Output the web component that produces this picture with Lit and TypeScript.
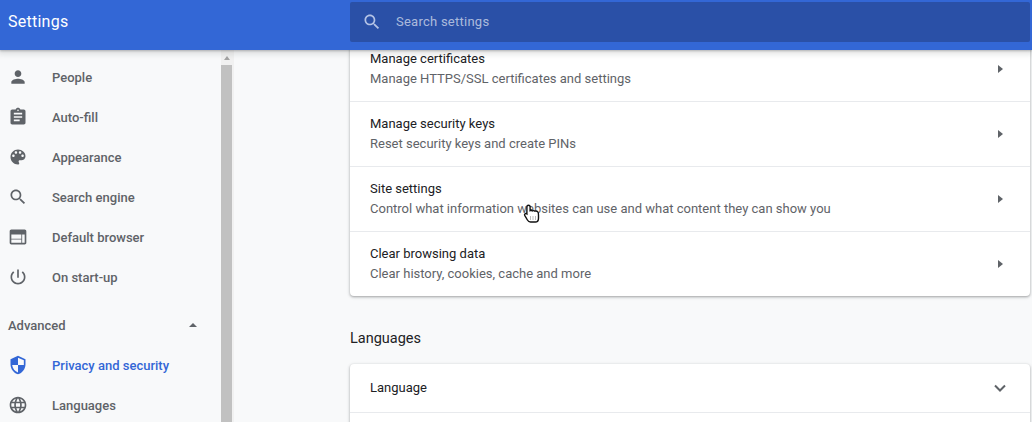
import { LitElement, html, css, svg } from "lit";
import { customElement } from "lit/decorators.js";

const icons: Record<string, unknown> = {
  people: svg`<path d="M12 12c2.21 0 4-1.79 4-4s-1.79-4-4-4-4 1.79-4 4 1.79 4 4 4zm0 2c-2.67 0-8 1.34-8 4v2h16v-2c0-2.66-5.33-4-8-4z"/>`,
  fill: svg`<path d="M19 3h-4.180C14.400 1.840 13.300 1 12 1s-2.400.84-2.820 2H5c-1.100 0-2 .9-2 2v14c0 1.100.9 2 2 2h14c1.100 0 2-.9 2-2V5c0-1.100-.9-2-2-2zm-7 0c.55 0 1 .45 1 1s-.45 1-1 1-1-.45-1-1 .45-1 1-1zm2 14H7v-2h7v2zm3-4H7v-2h10v2zm0-4H7V7h10v2z"/>`,
  palette: svg`<path d="M12 3c-4.970 0-9 4.030-9 9s4.030 9 9 9c.83 0 1.500-.67 1.500-1.500 0-.39-.15-.74-.39-1.010-.23-.26-.38-.61-.38-.99 0-.83.67-1.500 1.500-1.500H16c2.760 0 5-2.240 5-5 0-4.420-4.030-8-9-8zm-5.500 9c-.83 0-1.500-.67-1.500-1.500S5.670 9 6.500 9 8 9.670 8 10.500 7.330 12 6.500 12zm3-4C8.670 8 8 7.330 8 6.500S8.670 5 9.500 5s1.500.67 1.500 1.500S10.330 8 9.500 8zm5 0c-.83 0-1.500-.67-1.500-1.500S13.670 5 14.500 5s1.500.67 1.500 1.500S15.330 8 14.500 8zm3 4c-.83 0-1.500-.67-1.500-1.500S16.670 9 17.500 9s1.500.67 1.500 1.500-.67 1.500-1.500 1.500z"/>`,
  search: svg`<path d="M15.500 14h-.79l-.28-.27C15.410 12.590 16 11.110 16 9.500 16 5.910 13.090 3 9.500 3S3 5.910 3 9.500 5.910 16 9.500 16c1.610 0 3.090-.59 4.230-1.570l.27.28v.79l5 4.990L20.490 19l-4.990-5zm-6 0C7.010 14 5 11.990 5 9.500S7.010 5 9.500 5 14 7.010 14 9.500 11.990 14 9.500 14z"/>`,
  browser: svg`<path d="M22 5c0-1.100-.9-2-2-2H4c-1.100 0-2 .9-2 2v14c0 1.100.9 2 2 2h16c1.100 0 2-.9 2-2V5zm-6 14H4v-4h12v4zm0-5H4V9h12v5zm4 5h-3V9h3v10z"/>`,
  power: svg`<path d="M13 3h-2v10h2V3zm4.830 2.170l-1.420 1.420C17.990 7.860 19 9.810 19 12c0 3.870-3.130 7-7 7s-7-3.130-7-7c0-2.190 1.010-4.140 2.580-5.420L6.170 5.170C4.230 6.820 3 9.260 3 12c0 4.970 4.030 9 9 9s9-4.030 9-9c0-2.740-1.230-5.180-3.170-6.830z"/>`,
  shield: svg`<g transform="translate(24 0) scale(-1 1)"><path d="M12 1L3 5v6c0 5.550 3.840 10.740 9 12 5.160-1.260 9-6.450 9-12V5l-9-4zm0 10.990h7c-.53 4.120-3.280 7.790-7 8.940V12H5V6.300l7-3.110v8.800z"/></g>`,
  globe: svg`<path d="M11.990 2C6.470 2 2 6.480 2 12s4.470 10 9.990 10C17.520 22 22 17.520 22 12S17.520 2 11.990 2zm6.930 6h-2.950c-.32-1.250-.78-2.450-1.380-3.560 1.840.63 3.370 1.910 4.330 3.560zM12 4.040c.83 1.200 1.480 2.530 1.910 3.960h-3.820c.43-1.430 1.080-2.760 1.910-3.960zM4.260 14C4.100 13.360 4 12.690 4 12s.1-1.360.26-2h3.380c-.08.660-.14 1.320-.14 2 0 .68.060 1.340.14 2H4.260zm.82 2h2.950c.32 1.250.78 2.450 1.380 3.560-1.840-.63-3.370-1.900-4.330-3.560zm2.950-8H5.080c.96-1.660 2.490-2.930 4.330-3.560C8.810 5.550 8.350 6.750 8.030 8zM12 19.960c-.83-1.200-1.480-2.530-1.910-3.960h3.820c-.43 1.430-1.080 2.760-1.910 3.960zM14.340 14H9.660c-.09-.66-.16-1.320-.16-2 0-.68.070-1.350.16-2h4.680c.09.650.16 1.320.16 2 0 .68-.07 1.340-.16 2zm.25 5.560c.6-1.110 1.060-2.310 1.380-3.560h2.950c-.96 1.650-2.490 2.930-4.330 3.560zM16.360 14c.08-.66.14-1.320.14-2 0-.68-.06-1.340-.14-2h3.380c.16.640.26 1.310.26 2s-.1 1.360-.26 2h-3.380z"/>`,
};

const icon = (name: string) =>
  html`<svg class="icon" viewBox="0 0 24 24" aria-hidden="true">${icons[name]}</svg>`;

@customElement("app-root")
export class AppRoot extends LitElement {
  static styles = css`
    :host {
      display: block;
      width: 1032px;
      height: 422px;
      overflow: hidden;
      position: relative;
      background: #f8f9fa;
      font-family: Roboto, "Liberation Sans", sans-serif;
      font-size: 13px;
    }
    .header {
      height: 50px;
      background: #3367d6;
      display: flex;
      align-items: flex-start;
      position: relative;
      z-index: 2;
      box-shadow: 0 1px 2px rgba(60, 64, 67, 0.3), 0 2px 6px 2px rgba(60, 64, 67, 0.15);
    }
    .title {
      width: 350px;
      box-sizing: border-box;
      padding-left: 8px;
      color: #fff;
      font-size: 16px;
      line-height: 44px;
      letter-spacing: 0.25px;
    }
    .search {
      width: 680px;
      height: 40px;
      margin-top: 2px;
      background: #2a50a7;
      border-radius: 2px;
      display: flex;
      align-items: center;
      color: rgba(255, 255, 255, 0.62);
      font-size: 13px;
      letter-spacing: 0.25px;
    }
    .search span {
      margin-top: -2px;
    }
    .search .icon {
      width: 20px;
      height: 20px;
      margin-left: 12px;
      margin-right: 14px;
      margin-top: -1px;
      fill: #b4c3e6;
    }
    .body {
      display: flex;
      height: 372px;
    }
    .side {
      width: 221px;
      background: #f8f9fa;
      color: #5f6368;
      font-weight: 500;
      flex: none;
      padding-top: 7px;
      box-sizing: border-box;
    }
    .item {
      height: 40px;
      display: flex;
      align-items: center;
    }
    .item .icon {
      width: 20px;
      height: 20px;
      margin-left: 8px;
      margin-right: 24px;
      fill: #5f6368;
      flex: none;
    }
    .item.active {
      color: #3367d6;
    }
    .item.active .icon {
      fill: #3367d6;
    }
    .advanced {
      height: 40px;
      margin-top: 8px;
      display: flex;
      align-items: center;
      justify-content: space-between;
      padding: 0 24px 0 8px;
    }
    .up {
      width: 0;
      height: 0;
      border-left: 4px solid transparent;
      border-right: 4px solid transparent;
      border-bottom: 4px solid #5f6368;
    }
    .scroll {
      width: 13px;
      flex: none;
      background: #f1f1f1;
      display: flex;
      flex-direction: column;
      align-items: flex-start;
    }
    .scroll .arrow-box {
      width: 11px;
      height: 15px;
      display: flex;
      justify-content: center;
      padding-top: 6px;
      box-sizing: border-box;
    }
    .scroll .arrow {
      width: 0;
      height: 0;
      border-left: 3.5px solid transparent;
      border-right: 3.5px solid transparent;
      border-bottom: 4px solid #a3a3a3;
    }
    .scroll .thumb {
      width: 11px;
      flex: 1;
      background: #c1c1c1;
    }
    .main {
      flex: 1;
      min-width: 0;
      overflow: hidden;
      padding-left: 116px;
      padding-right: 2px;
    }
    .card {
      background: #fff;
      border-radius: 4px;
      box-shadow: 0 1px 2px rgba(60, 64, 67, 0.3), 0 1px 3px 1px rgba(60, 64, 67, 0.15);
    }
    .card.first {
      margin-top: -14px;
    }
    .row {
      height: 64px;
      display: flex;
      align-items: center;
      justify-content: space-between;
      padding: 0 27px 0 20px;
      border-top: 1px solid #e8eaed;
    }
    .row:first-child {
      border-top: none;
      height: 65px;
    }
    .row .t {
      color: #202124;
      line-height: 20px;
    }
    .row .s {
      color: #5f6368;
      line-height: 20px;
    }
    .tri {
      width: 0;
      height: 0;
      border-top: 4.5px solid transparent;
      border-bottom: 4.5px solid transparent;
      border-left: 5px solid #5f6368;
    }
    h2 {
      margin: 0;
      padding-top: 33px;
      padding-bottom: 15px;
      font-size: 14.5px;
      font-weight: 400;
      line-height: 20px;
      color: #202124;
    }
    .lang {
      height: 48px;
      padding: 0 24px 0 20px;
      display: flex;
      align-items: center;
      justify-content: space-between;
      color: #202124;
      border-bottom: 1px solid #e8eaed;
    }
    .lang span {
      margin-top: -2px;
    }
    .rest {
      height: 60px;
    }
    .chev {
      width: 12px;
      height: 8px;
      fill: none;
      stroke: #5f6368;
      stroke-width: 2;
    }
    .cursor {
      position: absolute;
      left: 523px;
      top: 204px;
      width: 18px;
      height: 20px;
    }
  `;

  private rows = [
    ["Manage certificates", "Manage HTTPS/SSL certificates and settings"],
    ["Manage security keys", "Reset security keys and create PINs"],
    ["Site settings", "Control what information websites can use and what content they can show you"],
    ["Clear browsing data", "Clear history, cookies, cache and more"],
  ];

  private nav = [
    ["people", "People"],
    ["fill", "Auto-fill"],
    ["palette", "Appearance"],
    ["search", "Search engine"],
    ["browser", "Default browser"],
    ["power", "On start-up"],
  ];

  render() {
    return html`
      <div class="header">
        <div class="title">Settings</div>
        <div class="search">${icon("search")}<span>Search settings</span></div>
      </div>
      <div class="body">
        <nav class="side">
          ${this.nav.map(([i, l]) => html`<div class="item">${icon(i)}<span>${l}</span></div>`)}
          <div class="advanced"><span>Advanced</span><span class="up"></span></div>
          <div class="item active">${icon("shield")}<span>Privacy and security</span></div>
          <div class="item">${icon("globe")}<span>Languages</span></div>
        </nav>
        <div class="scroll">
          <div class="arrow-box"><div class="arrow"></div></div>
          <div class="thumb"></div>
        </div>
        <main class="main">
          <section class="card first">
            ${this.rows.map(
              ([t, s]) => html`<div class="row">
                <div><div class="t">${t}</div><div class="s">${s}</div></div>
                <span class="tri"></span>
              </div>`
            )}
          </section>
          <h2>Languages</h2>
          <section class="card">
            <div class="lang">
              <span>Language</span>
              <svg class="chev" viewBox="0 0 12 8"><path d="M1 1.500l5 5 5-5"/></svg>
            </div>
            <div class="rest"></div>
          </section>
        </main>
      </div>
      <svg class="cursor" viewBox="0 0 18 20" aria-hidden="true">
        <path
          d="M5.500 1.200c1 0 1.600.7 1.600 1.600v3.900c.9-.4 1.800-.3 2.400.2.900-.4 1.900-.3 2.500.3 1-.3 2.100-.1 2.800.7.600.7.700 1.600.7 3.100v3.200c0 2-1.200 3.800-3.200 3.800H7.500c-1.500 0-2.400-.8-3.100-2L1.700 11.400c-.6-1.100.6-2.300 1.700-1.700l.5.3V2.800c0-.9.600-1.600 1.600-1.600z"
          fill="#fff"
          stroke="#111"
          stroke-width="1.400"
        />
        <path d="M7.500 12.500v3M10 12.500v3M12.500 12.500v3" stroke="#777" stroke-width="1" stroke-dasharray="1 1" />
      </svg>
    `;
  }
}
